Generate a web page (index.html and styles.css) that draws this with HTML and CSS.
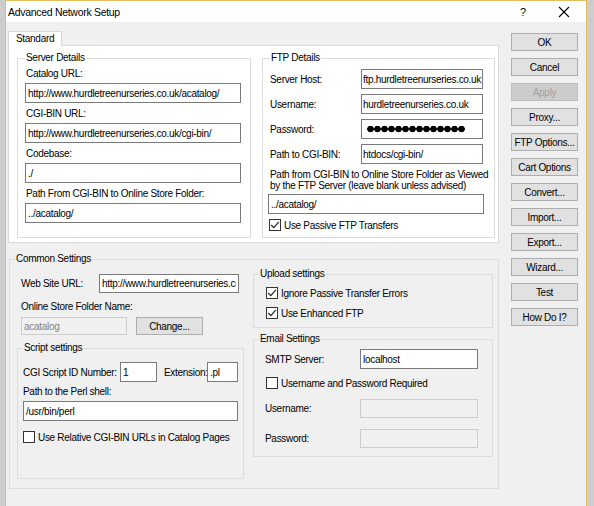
FILE: index.html
```html
<!DOCTYPE html>
<html lang="en">
<head>
    <meta charset="UTF-8">
    <title>Advanced Network Setup</title>
    <link rel="stylesheet" href="styles.css">
</head>
<body>
    <div class="window">
        <div class="titlebar">
            <span class="title">Advanced Network Setup</span>
            <span class="title-help">?</span>
            <span class="title-close">
                <svg width="12" height="12" viewBox="0 0 12 12"><path d="M1 1L11 11M11 1L1 11" stroke="#000" stroke-width="1.1" fill="none"/></svg>
            </span>
        </div>

        <div class="dialog">
            <div class="main">
                <div class="tabs"><div class="tab">Standard</div></div>

                <div class="tab-panel">
                    <fieldset class="group server-group">
                        <legend>Server Details</legend>
                        <div class="group-body">
                            <div class="field">
                                <label>Catalog URL:</label>
                                <input class="text" type="text" value="http://www.hurdletreenurseries.co.uk/acatalog/">
                            </div>
                            <div class="field">
                                <label>CGI-BIN URL:</label>
                                <input class="text" type="text" value="http://www.hurdletreenurseries.co.uk/cgi-bin/">
                            </div>
                            <div class="field">
                                <label>Codebase:</label>
                                <input class="text" type="text" value="./">
                            </div>
                            <div class="field">
                                <label>Path From CGI-BIN to Online Store Folder:</label>
                                <input class="text" type="text" value="../acatalog/">
                            </div>
                        </div>
                    </fieldset>

                    <fieldset class="group ftp-group">
                        <legend>FTP Details</legend>
                        <div class="group-body">
                            <div class="row">
                                <label class="row-label">Server Host:</label>
                                <input class="text ftp-input" type="text" value="ftp.hurdletreenurseries.co.uk">
                            </div>
                            <div class="row">
                                <label class="row-label">Username:</label>
                                <input class="text ftp-input" type="text" value="hurdletreenurseries.co.uk">
                            </div>
                            <div class="row">
                                <label class="row-label">Password:</label>
                                <div class="text ftp-input password"><span class="dots"></span></div>
                            </div>
                            <div class="row">
                                <label class="row-label">Path to CGI-BIN:</label>
                                <input class="text ftp-input" type="text" value="htdocs/cgi-bin/">
                            </div>
                            <p class="note">Path from CGI-BIN to Online Store Folder as Viewed<br>by the FTP Server (leave blank unless advised)</p>
                            <input class="text" type="text" value="../acatalog/">
                            <div class="check-row ftp-check">
                                <span class="check"><svg width="10" height="10" viewBox="0 0 10 10"><path d="M1.2 5L3.8 7.6L8.8 1.8" stroke="#222" stroke-width="1.2" fill="none"/></svg></span>
                                Use Passive FTP Transfers
                            </div>
                        </div>
                    </fieldset>
                </div>

                <fieldset class="group common-group">
                    <legend>Common Settings</legend>
                    <div class="common-body">
                        <div class="common-left">
                            <div class="row site-row">
                                <label class="site-label">Web Site URL:</label>
                                <input class="text site-input" type="text" value="http://www.hurdletreenurseries.co.uk/">
                            </div>
                            <label class="folder-label">Online Store Folder Name:</label>
                            <div class="row folder-row">
                                <input class="text disabled folder-input" type="text" value="acatalog" disabled>
                                <button class="btn change-btn">Change...</button>
                            </div>

                            <fieldset class="group script-group">
                                <legend>Script settings</legend>
                                <div class="group-body">
                                    <div class="row">
                                        <label class="id-label">CGI Script ID Number:</label>
                                        <input class="text id-input" type="text" value="1">
                                        <label class="ext-label">Extension:</label>
                                        <input class="text ext-input" type="text" value=".pl">
                                    </div>
                                    <label class="perl-label">Path to the Perl shell:</label>
                                    <input class="text" type="text" value="/usr/bin/perl">
                                    <div class="check-row relative-check">
                                        <span class="check"></span>
                                        Use Relative CGI-BIN URLs in Catalog Pages
                                    </div>
                                </div>
                            </fieldset>
                        </div>

                        <div class="common-right">
                            <fieldset class="group upload-group">
                                <legend>Upload settings</legend>
                                <div class="group-body">
                                    <div class="check-row">
                                        <span class="check"><svg width="10" height="10" viewBox="0 0 10 10"><path d="M1.2 5L3.8 7.6L8.8 1.8" stroke="#222" stroke-width="1.2" fill="none"/></svg></span>
                                        Ignore Passive Transfer Errors
                                    </div>
                                    <div class="check-row">
                                        <span class="check"><svg width="10" height="10" viewBox="0 0 10 10"><path d="M1.2 5L3.8 7.6L8.8 1.8" stroke="#222" stroke-width="1.2" fill="none"/></svg></span>
                                        Use Enhanced FTP
                                    </div>
                                </div>
                            </fieldset>

                            <fieldset class="group email-group">
                                <legend>Email Settings</legend>
                                <div class="group-body">
                                    <div class="row">
                                        <label class="mail-label">SMTP Server:</label>
                                        <input class="text mail-input" type="text" value="localhost">
                                    </div>
                                    <div class="check-row auth-check">
                                        <span class="check"></span>
                                        Username and Password Required
                                    </div>
                                    <div class="row user-row">
                                        <label class="mail-label">Username:</label>
                                        <input class="text mail-input disabled" type="text" disabled>
                                    </div>
                                    <div class="row pass-row">
                                        <label class="mail-label">Password:</label>
                                        <input class="text mail-input disabled" type="text" disabled>
                                    </div>
                                </div>
                            </fieldset>
                        </div>
                    </div>
                </fieldset>
            </div>

            <div class="buttons">
                <button class="btn">OK</button>
                <button class="btn">Cancel</button>
                <button class="btn" disabled>Apply</button>
                <button class="btn">Proxy...</button>
                <button class="btn">FTP Options...</button>
                <button class="btn">Cart Options</button>
                <button class="btn">Convert...</button>
                <button class="btn">Import...</button>
                <button class="btn">Export...</button>
                <button class="btn">Wizard...</button>
                <button class="btn">Test</button>
                <button class="btn">How Do I?</button>
            </div>
        </div>
    </div>
</body>
</html>
```

FILE: styles.css
```css
:root {
    --font: "Liberation Sans", Arial, sans-serif;
    --tight: -0.3px;
    --dialog-bg: #f0f0f0;
    --frame-color: #e6bf5c;
    --group-border: #dcdcdc;
    --input-border: #7a7a7a;
    --text-color: #000000;
}

* {
    margin: 0;
    padding: 0;
    box-sizing: border-box;
}

body {
    background: #cdcdcd;
    font-family: var(--font);
    font-size: 10px;
    letter-spacing: var(--tight);
    color: var(--text-color);
    height: 506px;
    overflow: hidden;
}

.window {
    margin-left: 5px;
    width: 582px;
    height: 506px;
    background: var(--dialog-bg);
    border-left: 1px solid var(--frame-color);
    border-right: 1px solid var(--frame-color);
    border-top: 1px solid var(--frame-color);
}

/* title bar */
.titlebar {
    height: 21px;
    background: #ffffff;
    display: flex;
    align-items: center;
    padding-left: 2px;
}

.title {
    font-size: 10.5px;
    flex: 1;
}

.title-help {
    font-size: 11px;
    width: 36px;
}

.title-close {
    width: 30px;
    display: flex;
    padding-left: 2px;
}

/* body */
.dialog {
    display: flex;
    gap: 12px;
    padding: 9px 0 0 2px;
}

.main {
    width: 491px;
}

.tabs {
    display: flex;
}

.tab {
    position: relative;
    z-index: 1;
    height: 15px;
    line-height: 13px;
    padding: 0 7px 0 7px;
    background: #ffffff;
    border: 1px solid #d9d9d9;
    border-bottom: none;
    margin-bottom: -1px;
}

.tab-panel {
    height: 198px;
    background: #ffffff;
    border: 1px solid #d9d9d9;
    display: flex;
    gap: 11px;
    padding: 6px 3px 4px 8px;
}

/* group boxes */
.group {
    border: 1px solid var(--group-border);
    min-width: 0;
}

.group legend {
    margin-left: 7px;
    padding: 0 1px;
    line-height: 12px;
}

.server-group {
    width: 234px;
}

.server-group .group-body {
    padding: 4px 9px 0 7px;
}

.field {
    margin-bottom: 5px;
}

.field label {
    display: block;
    line-height: 12px;
    margin: 0 0 3px 1px;
}

.text {
    display: block;
    width: 100%;
    height: 20px;
    border: 1px solid var(--input-border);
    background: #ffffff;
    font: inherit;
    letter-spacing: var(--tight);
    color: var(--text-color);
    padding: 0 2px;
    outline: none;
}

.text.disabled {
    background: var(--dialog-bg);
    border-color: #cccccc;
    color: #838383;
}

.ftp-group {
    width: 233px;
}

.ftp-group .group-body {
    padding: 5px 10px 0 5px;
}

.row {
    display: flex;
    align-items: center;
}

.ftp-group .row {
    margin-bottom: 5px;
}

.row-label {
    width: 93px;
    padding-left: 2px;
}

.ftp-input {
    width: 122px;
    padding: 0 0 0 1px;
}

.password {
    display: flex;
    align-items: center;
    padding-left: 5px;
}

.dots {
    display: block;
    width: 98px;
    height: 8px;
    background: radial-gradient(circle, #000 3px, transparent 3.6px) repeat-x;
    background-size: 7px 8px;
}

.note {
    line-height: 11px;
    white-space: nowrap;
    margin: 0 0 3px 2px;
}

.check-row {
    display: flex;
    align-items: center;
    gap: 3px;
    height: 12px;
}

.check {
    width: 12px;
    height: 12px;
    border: 1px solid #333333;
    background: #ffffff;
    display: flex;
    align-items: center;
    justify-content: center;
}

.ftp-check {
    margin: 5px 0 0 1px;
}

/* common settings */
.common-group {
    margin-top: 10px;
    margin-left: 1px;
    height: 236px;
}

.common-group legend {
    margin-left: 5px;
}

.common-body {
    display: flex;
    gap: 9px;
    padding: 3px 5px 0 7px;
}

.common-left {
    width: 227px;
    padding-top: 6px;
}

.site-row {
    height: 19px;
}

.site-label {
    width: 82px;
    padding-left: 4px;
}

.site-input {
    width: 140px;
    height: 19px;
}

.folder-label {
    display: block;
    line-height: 12px;
    margin: 8px 0 4px 4px;
}

.folder-row {
    padding-left: 4px;
}

.folder-input {
    width: 106px;
    height: 18px;
}

.btn {
    height: 18px;
    width: 67px;
    font: inherit;
    letter-spacing: var(--tight);
    color: var(--text-color);
    background: #e1e1e1;
    border: 1px solid #adadad;
}

.btn:disabled {
    color: #a0a0a0;
    background: #cccccc;
    border-color: #bfbfbf;
}

.change-btn {
    margin-left: 9px;
}

.script-group {
    margin-top: 7px;
    height: 137px;
}

.script-group .group-body {
    padding: 8px 5px 0 5px;
}

.script-group .row {
    height: 20px;
}

.id-label {
    width: 99px;
}

.id-input {
    width: 37px;
}

.ext-label {
    width: 50px;
    padding-left: 7px;
}

.ext-input {
    width: 31px;
}

.perl-label {
    display: block;
    line-height: 12px;
    margin: 4px 0 3px 0;
}

.relative-check {
    margin-top: 10px;
}

.common-right {
    width: 241px;
}

.upload-group {
    height: 60px;
}

.upload-group .group-body {
    padding: 7px 0 0 12px;
    display: flex;
    flex-direction: column;
    gap: 8px;
}

.email-group {
    margin-top: 5px;
    height: 124px;
}

.email-group .group-body {
    padding: 4px 0 0 11px;
}

.mail-label {
    width: 95px;
}

.mail-input {
    width: 118px;
}

.email-group .row {
    height: 20px;
}

.auth-check {
    margin: 8px 0 0 1px;
}

.user-row {
    margin-top: 9px;
}

.pass-row {
    margin-top: 10px;
}

.email-group .user-row .text,
.email-group .pass-row .text {
    height: 19px;
}

/* right hand buttons */
.buttons {
    display: flex;
    flex-direction: column;
    gap: 7px;
    padding-top: 2px;
}
```
